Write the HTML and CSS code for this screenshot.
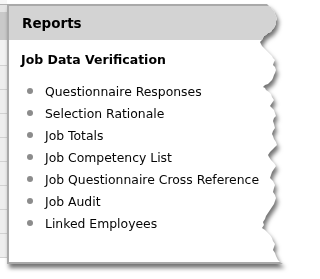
FILE: index.html
```html
<!DOCTYPE html>
<html>
<head>
<meta charset="utf-8">
<link rel="stylesheet" href="styles.css">
</head>
<body>
<div class="scene">
  <div class="strip">
    <div class="s-top"></div>
    <div class="s-sub"></div>
    <div class="s-head"></div>
    <div class="s-row r1"></div>
    <div class="s-row"></div>
    <div class="s-row"></div>
    <div class="s-row"></div>
    <div class="s-row"></div>
    <div class="s-row"></div>
    <div class="s-row"></div>
    <div class="s-row"></div>
    <div class="s-row"></div>
  </div>
  <div class="panel-wrap">
    <div class="panel">
      <div class="panel-head">Reports</div>
      <div class="panel-body">
        <div class="section-title">Job Data Verification</div>
        <ul class="links">
          <li>Questionnaire Responses</li>
          <li>Selection Rationale</li>
          <li>Job Totals</li>
          <li>Job Competency List</li>
          <li>Job Questionnaire Cross Reference</li>
          <li>Job Audit</li>
          <li>Linked Employees</li>
        </ul>
      </div>
    </div>
  </div>
</div>
</body>
</html>
```

FILE: styles.css
```css
html, body {
  margin: 0;
  padding: 0;
  background: #ffffff;
}
.scene {
  display: flex;
  align-items: flex-start;
  width: 301px;
  height: 279px;
  overflow: hidden;
  font-family: Verdana, "DejaVu Sans", sans-serif;
}
.strip {
  width: 7px;
  flex: none;
  display: flex;
  flex-direction: column;
}
.s-top {
  height: 4px;
  background: #f6f6f6;
  border-bottom: 1px solid #b2b2b2;
}
.s-sub {
  height: 7px;
  background: #e4e4e4;
}
.s-head {
  height: 28px;
  background: #c9c9c9;
}
.s-row {
  height: 23px;
  background: #eeeeee;
  border-bottom: 1px solid #d2d2d2;
}
.s-row.r1 {
  height: 25px;
  background: #f2f2f2;
}
.panel-wrap {
  margin-top: 4px;
  filter: drop-shadow(2px 4px 2px rgba(0, 0, 0, 0.55));
}
.panel {
  box-sizing: border-box;
  width: 284px;
  height: 260px;
  background: #ffffff;
  border: 2px solid #a9a9a9;
  clip-path: polygon(0 0, 260px 0, 262px 2px, 264px 3px, 265px 5px, 267px 7px, 268px 10px, 269px 12px, 270px 15px, 269px 17px, 269px 20px, 268px 22px, 267px 24px, 265px 26px, 264px 28px, 261px 29px, 259px 31px, 257px 32px, 256px 34px, 255px 36px, 253px 38px, 254px 40px, 255px 42px, 256px 43px, 258px 45px, 260px 47px, 262px 49px, 265px 52px, 266px 54px, 268px 56px, 267px 58px, 266px 61px, 268px 63px, 269px 66px, 268px 69px, 267px 71px, 266px 74px, 265px 76px, 263px 78px, 261px 80px, 258px 81px, 256px 83px, 258px 84px, 259px 86px, 262px 88px, 264px 90px, 265px 93px, 267px 96px, 265px 99px, 263px 102px, 265px 104px, 267px 106px, 268px 109px, 269px 112px, 267px 114px, 266px 117px, 267px 120px, 268px 124px, 266px 127px, 265px 130px, 266px 132px, 267px 135px, 269px 138px, 270px 141px, 268px 143px, 265px 146px, 263px 148px, 261px 151px, 262px 153px, 264px 156px, 267px 159px, 269px 162px, 267px 165px, 265px 168px, 264px 171px, 263px 174px, 266px 177px, 268px 181px, 267px 184px, 266px 188px, 268px 191px, 269px 194px, 268px 197px, 267px 200px, 265px 203px, 263px 206px, 261px 209px, 259px 212px, 258px 215px, 256px 218px, 257px 221px, 255px 224px, 258px 226px, 260px 228px, 263px 231px, 265px 234px, 266px 237px, 268px 240px, 267px 243px, 266px 246px, 268px 249px, 269px 252px, 270px 254px, 271px 256px, 273px 258px, 276px 260px, 0 260px);
}
.panel-head {
  height: 34px;
  line-height: 34px;
  background: #d3d3d3;
  padding-left: 13px;
  font-weight: bold;
  font-size: 13.5px;
  color: #000000;
}
.panel-body {
  padding: 12px 0 0 12px;
}
.section-title {
  font-weight: bold;
  font-size: 12.5px;
  line-height: 16px;
  color: #000000;
}
.links {
  list-style: none;
  margin: 12px 0 0 0;
  padding: 0 0 0 6px;
}
.links li {
  display: flex;
  align-items: center;
  gap: 12px;
  height: 22px;
  font-size: 12.4px;
  color: #050505;
}
.links li::before {
  content: "";
  width: 6px;
  height: 6px;
  border-radius: 50%;
  background: #8c8c8c;
  flex: none;
}
```
